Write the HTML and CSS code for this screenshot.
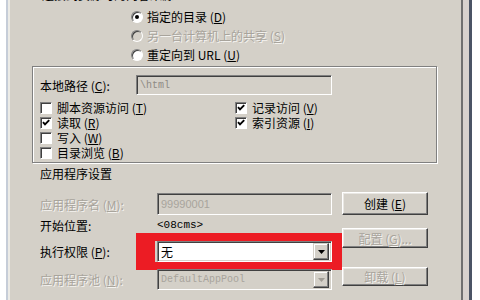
FILE: index.html
```html
<!DOCTYPE html>
<html lang="zh-CN">
<head>
  <meta charset="UTF-8">
  <title>主目录</title>
  <link rel="stylesheet" href="styles.css">
</head>
<body>
  <div class="window">
    <div class="page">
      <div class="source-title">连接到资源时的内容来源:</div>
      <div class="radio-list">
        <div class="radio-row"><span class="radio checked"></span>指定的目录 (<u>D</u>)</div>
        <div class="radio-row disabled"><span class="radio"></span>另一台计算机上的共享 (<u>S</u>)</div>
        <div class="radio-row"><span class="radio"></span>重定向到 URL (<u>U</u>)</div>
      </div>

      <div class="group">
        <div class="path-row">
          <span class="path-label">本地路径 (<u>C</u>):</span>
          <div class="field path-field">\html</div>
        </div>
        <div class="checks">
          <div class="check-col">
            <div class="check"><span class="box"></span>脚本资源访问 (<u>T</u>)</div>
            <div class="check"><span class="box"><svg viewBox="0 0 10 10" width="10" height="10"><path d="M2 4.2 L4 6.4 L8.2 2.2" fill="none" stroke="#000" stroke-width="1.9"/></svg></span>读取 (<u>R</u>)</div>
            <div class="check"><span class="box"></span>写入 (<u>W</u>)</div>
            <div class="check"><span class="box"></span>目录浏览 (<u>B</u>)</div>
          </div>
          <div class="check-col">
            <div class="check"><span class="box"><svg viewBox="0 0 10 10" width="10" height="10"><path d="M2 4.2 L4 6.4 L8.2 2.2" fill="none" stroke="#000" stroke-width="1.9"/></svg></span>记录访问 (<u>V</u>)</div>
            <div class="check"><span class="box"><svg viewBox="0 0 10 10" width="10" height="10"><path d="M2 4.2 L4 6.4 L8.2 2.2" fill="none" stroke="#000" stroke-width="1.9"/></svg></span>索引资源 (<u>I</u>)</div>
          </div>
        </div>
      </div>

      <div class="section-title">应用程序设置</div>
      <div class="settings">
        <div class="fields">
          <div class="row r1">
            <span class="row-label disabled">应用程序名 (<u>M</u>):</span>
            <div class="field app-name">99990001</div>
          </div>
          <div class="row r2">
            <span class="row-label">开始位置:</span>
            <span class="start-value">&lt;08cms&gt;</span>
          </div>
          <div class="row r3">
            <span class="row-label">执行权限 (<u>P</u>):</span>
            <div class="field select">
              <span class="select-text">无</span>
              <span class="arrow"><svg viewBox="0 0 7 4" width="7" height="4"><polygon points="0,0 7,0 3.5,4" fill="#000"/></svg></span>
            </div>
            <div class="red-frame"></div>
          </div>
          <div class="row r4">
            <span class="row-label disabled">应用程序池 (<u>N</u>):</span>
            <div class="field select locked">
              <span class="pool-text">DefaultAppPool</span>
              <span class="arrow"><svg viewBox="0 0 7 4" width="7" height="4"><polygon points="0,0 7,0 3.5,4" fill="#a09c94"/></svg></span>
            </div>
          </div>
        </div>
        <div class="buttons">
          <div class="btn b1">创建 (<u>E</u>)</div>
          <div class="btn b2 disabled">配置 (<u>G</u>)...</div>
          <div class="btn b3 disabled">卸载 (<u>L</u>)</div>
        </div>
      </div>
    </div>
    <div class="gutter"></div>
  </div>
</body>
</html>
```

FILE: styles.css
```css
body {
  margin: 0;
  background-color: #fff;
  font-family: "Noto Sans CJK SC", "Liberation Sans", sans-serif;
  font-size: 12px;
  color: #000;
  overflow: hidden;
}
u {
  text-decoration: underline;
}
.window {
  display: flex;
  width: 461px;
  height: 300px;
  margin-left: 6px;
  border-left: 2px solid #c6cdd8;
  border-right: 3px solid #4b5465;
  background-color: #d4d0c8;
}
.page {
  box-sizing: border-box;
  width: 455px;
  border-left: 2px solid #ecebe6;
  border-right: 2px solid #707070;
  padding-left: 22px;
}
.gutter {
  flex: 1;
  background-color: #d8d2ce;
}
.disabled {
  color: #a8a49c;
  text-shadow: 1px 1px 0 #f4f3f0;
}

/* content source */
.source-title {
  margin-top: -15px;
  margin-left: 10px;
  height: 22px;
  line-height: 19px;
}
.radio-list {
  padding-left: 99px;
}
.radio-row {
  display: flex;
  align-items: center;
  height: 19px;
  line-height: 19px;
}
.radio {
  position: relative;
  box-sizing: border-box;
  width: 12px;
  height: 12px;
  margin-right: 4px;
  border: 1px solid;
  border-color: #808080 #fff #fff #808080;
  border-radius: 50%;
  background-color: #fff;
  box-shadow: inset 1px 1px 0 #404040;
}
.radio.checked::after {
  content: "";
  position: absolute;
  left: 3px;
  top: 3px;
  width: 4px;
  height: 4px;
  border-radius: 50%;
  background-color: #000;
}
.radio-row.disabled .radio {
  background-color: #d4d0c8;
}

/* local path group */
.group {
  box-sizing: border-box;
  width: 405px;
  height: 97px;
  margin-top: 2px;
  padding: 8px 0 2px 7px;
  border: 1px solid #808080;
  box-shadow: inset 1px 1px 0 #fff, 1px 1px 0 #fff;
}
.path-row {
  display: flex;
  align-items: center;
  height: 20px;
}
.path-label {
  width: 96px;
}
.field {
  box-sizing: border-box;
  display: flex;
  align-items: center;
  height: 100%;
  padding-left: 3px;
  border: 1px solid;
  border-color: #808080 #fff #fff #808080;
  box-shadow: inset 1px 1px 0 #404040, inset -1px -1px 0 #d4d0c8;
}
.path-field {
  width: 196px;
  font-family: "Liberation Mono", monospace;
  font-size: 10px;
  color: #8e8a84;
}
.checks {
  display: flex;
  margin-top: 5px;
}
.check-col {
  width: 195px;
}
.check {
  display: flex;
  align-items: center;
  height: 15px;
  line-height: 15px;
}
.box {
  box-sizing: border-box;
  display: flex;
  width: 12px;
  height: 12px;
  margin-right: 5px;
  border: 1px solid;
  border-color: #808080 #fff #fff #808080;
  background-color: #fff;
  box-shadow: inset 1px 1px 0 #404040;
}

/* application settings */
.section-title {
  margin: 1px 0 0 8px;
  line-height: 19px;
}
.settings {
  display: flex;
  margin-top: 9px;
  padding-left: 8px;
}
.fields {
  width: 292px;
  margin-top: 1px;
}
.row {
  position: relative;
  display: flex;
  align-items: center;
  height: 22px;
}
.row-label {
  width: 117px;
  flex-shrink: 0;
}
.row .field {
  width: 175px;
}
.r2 {
  height: 20px;
}
.r3 {
  margin-top: 6px;
  height: 21px;
}
.r4 {
  margin-top: 7px;
  height: 21px;
}
.app-name {
  font-family: "Liberation Sans", sans-serif;
  font-size: 11px;
  color: #a8a49c;
}
.start-value {
  font-family: "Liberation Mono", monospace;
  font-size: 11px;
}
.select {
  background-color: #fff;
  padding-right: 2px;
}
.select.locked {
  background-color: #d4d0c8;
}
.select-text {
  flex: 1;
}
.pool-text {
  flex: 1;
  font-family: "Liberation Mono", monospace;
  font-size: 10px;
  color: #a8a49c;
}
.arrow {
  box-sizing: border-box;
  display: flex;
  align-items: center;
  justify-content: center;
  width: 16px;
  height: 17px;
  border: 1px solid;
  border-color: #d4d0c8 #404040 #404040 #d4d0c8;
  background-color: #d4d0c8;
  box-shadow: inset -1px -1px 0 #808080, inset 1px 1px 0 #fff;
}
.red-frame {
  position: absolute;
  left: 96px;
  top: -8px;
  box-sizing: border-box;
  width: 206px;
  height: 37px;
  border: 8px solid #ec1c24;
  border-left-width: 19px;
  border-right-width: 10px;
}
.buttons {
  display: flex;
  flex-direction: column;
  width: 86px;
  margin-left: 10px;
}
.btn {
  box-sizing: border-box;
  display: flex;
  align-items: center;
  justify-content: center;
  height: 23px;
  border: 1px solid;
  border-color: #fff #404040 #404040 #fff;
  background-color: #d4d0c8;
  box-shadow: inset -1px -1px 0 #808080, inset 1px 1px 0 #e9e7e3;
}
.b2 {
  margin-top: 13px;
  height: 20px;
}
.b3 {
  margin-top: 19px;
  height: 19px;
}
```
